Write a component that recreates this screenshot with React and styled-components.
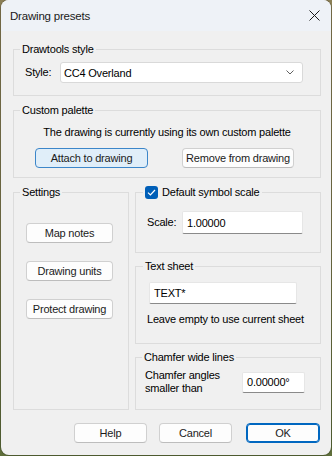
import React from 'react';
import styled, { createGlobalStyle } from 'styled-components';

const Global = createGlobalStyle`
  html, body { margin: 0; padding: 0; }
  body {
    width: 332px;
    height: 456px;
    overflow: hidden;
    background: linear-gradient(180deg, #8b7f56 0%, #7d7a4c 55%, #5e6e3a 100%);
    font-family: "Segoe UI", "Liberation Sans", Arial, sans-serif;
    font-size: 11px;
    letter-spacing: -0.2px;
    color: #000;
    white-space: nowrap;
  }
  * { box-sizing: border-box; }
`;

const Window = styled.div`
  margin-left: 1px;
  width: 330px;
  height: 455px;
  border-radius: 8px;
  overflow: hidden;
  background: #f0f0f0;
  box-shadow: 0 0 0 1px rgba(0, 0, 0, 0.18);
  display: flex;
  flex-direction: column;
`;

const TitleBar = styled.div`
  height: 31px;
  flex: none;
  display: flex;
  align-items: center;
  justify-content: space-between;
  padding: 0 10px 0 9px;
  background: #eef2f7;
  font-size: 11.5px;
  color: #1a1a1a;
`;

const Close = styled.svg`
  width: 11px;
  height: 11px;
  margin-right: 1px;
`;

const Content = styled.div`
  display: flex;
  flex-direction: column;
  padding: 11px 10px 0 12px;
`;

const Group = styled.fieldset`
  margin: 0;
  padding: 0;
  min-width: 0;
  border: 1px solid #dcdcdc;
  margin-top: ${p => p.$mt || 0}px;
  height: ${p => (p.$h ? `${p.$h}px` : 'auto')};
  flex: ${p => (p.$grow ? 1 : 'none')};
`;

const Legend = styled.legend`
  margin-left: ${p => p.$ml || 6}px;
  padding: 0 2px;
  line-height: 14px;
  height: 14px;
  display: flex;
  align-items: center;
  gap: 4px;
`;

const StyleRow = styled.div`
  display: flex;
  align-items: center;
  padding: 6px 17px 12px 11px;
`;

const FieldLabel = styled.span`
  width: ${p => p.$w}px;
  flex: none;
  line-height: 15px;
`;

const Select = styled.div`
  flex: 1;
  height: 21px;
  display: flex;
  align-items: center;
  justify-content: space-between;
  padding: 0 8px 0 3px;
  background: #fff;
  border: 1px solid #d9d9d9;
  border-radius: 3px;
`;

const PaletteBody = styled.div`
  display: flex;
  flex-direction: column;
  padding: 8px 0 9px 0;
`;

const Note = styled.div`
  text-align: center;
  line-height: 15px;
`;

const ButtonRow = styled.div`
  display: flex;
  gap: 34px;
  padding-left: 21px;
  margin-top: 8px;
`;

const Button = styled.button`
  height: 20px;
  width: ${p => p.$w}px;
  flex: none;
  padding: 0;
  font-family: inherit;
  font-size: 11px;
  letter-spacing: -0.2px;
  white-space: nowrap;
  color: #1b1b1b;
  background: ${p => (p.$active ? '#e0eef9' : '#fdfdfd')};
  border: 1px solid ${p => (p.$active ? '#3c86c9' : p.$default ? '#0067c0' : '#d0d0d0')};
  border-bottom-color: ${p => (p.$active ? '#3c86c9' : p.$default ? '#0067c0' : '#bdbdbd')};
  box-shadow: ${p => (p.$default ? 'inset 0 0 0 1px #0067c0' : 'none')};
  border-radius: 4px;
  margin-left: ${p => p.$ml || 0}px;
`;

const Columns = styled.div`
  display: grid;
  grid-template-columns: 116px 186px;
  gap: 6px;
  margin-top: 7px;
  height: 225px;
`;

const SettingsBody = styled.div`
  display: flex;
  flex-direction: column;
  gap: 18px;
  padding: 24px 0 0 12px;
`;

const RightCol = styled.div`
  display: flex;
  flex-direction: column;
  gap: 6px;
`;

const Check = styled.span`
  width: 13px;
  height: 13px;
  border-radius: 3px;
  background: #005fb8;
  display: inline-flex;
  align-items: center;
  justify-content: center;
  flex: none;
`;

const ScaleRow = styled.div`
  display: flex;
  align-items: center;
  padding: 12px 17px 0 11px;
`;

const Input = styled.div`
  height: ${p => p.$h || 21}px;
  width: ${p => (p.$w ? `${p.$w}px` : 'auto')};
  flex: ${p => (p.$w ? 'none' : 1)};
  display: flex;
  align-items: center;
  padding-left: 4px;
  background: #fff;
  border: 1px solid #e6e6e6;
  border-bottom-color: #8a8a8a;
  border-radius: 2px;
`;

const SheetBody = styled.div`
  display: flex;
  flex-direction: column;
  padding: 9px 0 0 13px;
`;

const Hint = styled.div`
  margin: 8px 0 0 -2px;
  line-height: 15px;
`;

const ChamferRow = styled.div`
  display: flex;
  align-items: center;
  justify-content: space-between;
  padding: 5px 15px 0 9px;
`;

const ChamferLabel = styled.div`
  line-height: 13px;
`;

const Footer = styled.div`
  display: flex;
  justify-content: flex-end;
  gap: 12px;
  margin-top: 13px;
  padding-right: 1px;
`;

export default function App() {
  return (
    <>
      <Global />
      <Window>
        <TitleBar>
          <span>Drawing presets</span>
          <Close viewBox="0 0 11 11">
            <path d="M0.5 0.5 L10.5 10.5 M10.5 0.5 L0.5 10.5" stroke="#1a1a1a" strokeWidth="1" fill="none" />
          </Close>
        </TitleBar>
        <Content>
          <Group>
            <Legend>Drawtools style</Legend>
            <StyleRow>
              <FieldLabel $w={35}>Style:</FieldLabel>
              <Select>
                <span>CC4 Overland</span>
                <svg width="8" height="5" viewBox="0 0 8 5">
                  <path d="M0.5 0.5 L4 4 L7.5 0.5" stroke="#606060" strokeWidth="1" fill="none" />
                </svg>
              </Select>
            </StyleRow>
          </Group>

          <Group $mt={7}>
            <Legend>Custom palette</Legend>
            <PaletteBody>
              <Note>The drawing is currently using its own custom palette</Note>
              <ButtonRow>
                <Button $w={113} $active>Attach to drawing</Button>
                <Button $w={112}>Remove from drawing</Button>
              </ButtonRow>
            </PaletteBody>
          </Group>

          <Columns>
            <Group>
              <Legend>Settings</Legend>
              <SettingsBody>
                <Button $w={87}>Map notes</Button>
                <Button $w={87}>Drawing units</Button>
                <Button $w={87}>Protect drawing</Button>
              </SettingsBody>
            </Group>

            <RightCol>
              <Group $h={68}>
                <Legend $ml={7}>
                  <Check>
                    <svg width="9" height="7" viewBox="0 0 9 7">
                      <path d="M1 3.6 L3.4 6 L8 1" stroke="#fff" strokeWidth="1.2" fill="none" />
                    </svg>
                  </Check>
                  Default symbol scale
                </Legend>
                <ScaleRow>
                  <FieldLabel $w={35}>Scale:</FieldLabel>
                  <Input $h={23}>1.00000</Input>
                </ScaleRow>
              </Group>

              <Group $h={85}>
                <Legend $ml={7}>Text sheet</Legend>
                <SheetBody>
                  <Input $w={148} $h={22}>TEXT*</Input>
                  <Hint>Leave empty to use current sheet</Hint>
                </SheetBody>
              </Group>

              <Group $grow>
                <Legend $ml={6}>Chamfer wide lines</Legend>
                <ChamferRow>
                  <ChamferLabel>
                    Chamfer angles
                    <br />
                    smaller than
                  </ChamferLabel>
                  <Input $w={63} $h={21}>0.00000°</Input>
                </ChamferRow>
              </Group>
            </RightCol>
          </Columns>

          <Footer>
            <Button $w={73}>Help</Button>
            <Button $w={73}>Cancel</Button>
            <Button $w={74} $ml={2} $default>OK</Button>
          </Footer>
        </Content>
      </Window>
    </>
  );
}
